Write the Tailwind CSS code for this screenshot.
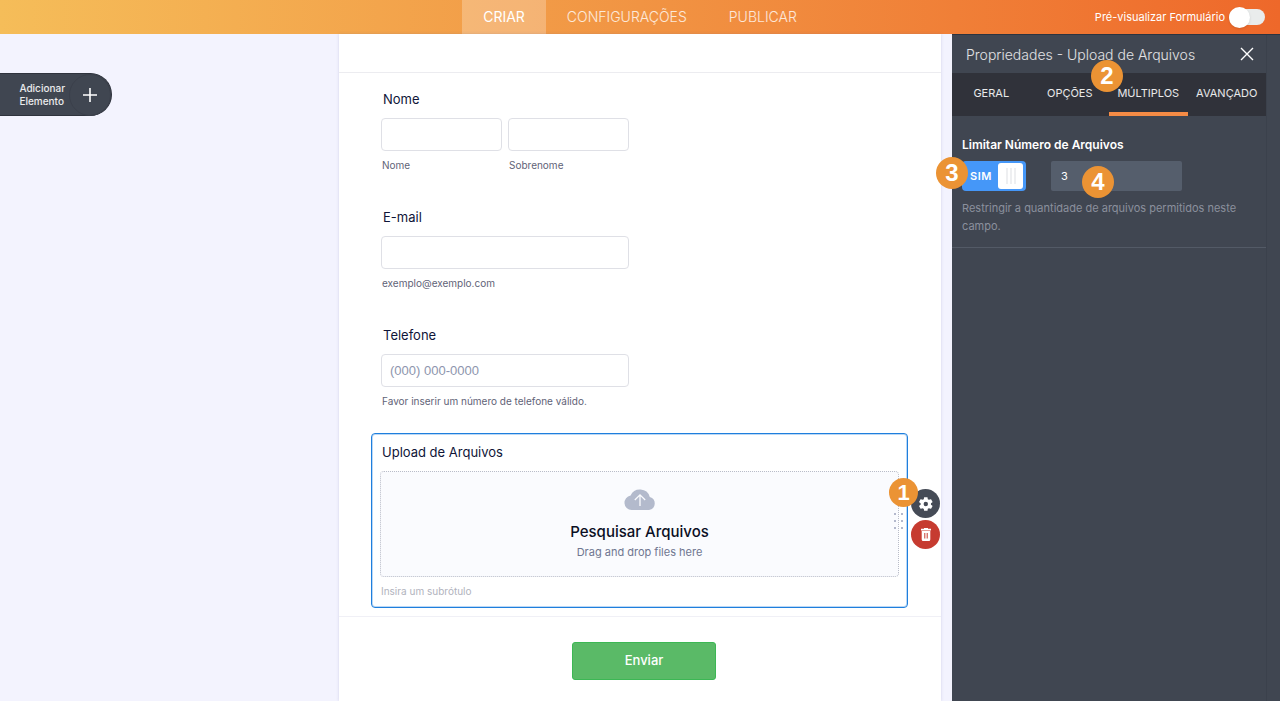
<!DOCTYPE html>
<html lang="pt-BR">
<head>
    <meta charset="UTF-8">
    <meta name="viewport" content="width=device-width, initial-scale=1.0">
    <title>Criar Formulário - Upload de Arquivos</title>
    <script src="https://cdn.jsdelivr.net/npm/@tailwindcss/browser@4"></script>
</head>
<body class="min-h-screen flex flex-col overflow-x-hidden bg-[#f3f3fe] font-['Inter',sans-serif] text-[#0f1538]">
    <!-- Top bar -->
    <header class="grid grid-cols-[1fr_auto_1fr] h-[34px] bg-linear-to-r from-[#f5bd59] via-[#f19443] to-[#ee682a]">
        <nav class="col-start-2 flex text-sm font-light text-white/80">
            <a href="#" class="flex items-center px-[21px] bg-white/25 text-white font-normal">CRIAR</a>
            <a href="#" class="flex items-center px-[21px]">CONFIGURAÇÕES</a>
            <a href="#" class="flex items-center px-[21px]">PUBLICAR</a>
        </nav>
        <label class="flex items-center justify-end gap-1 pr-[15px] text-[11px] text-white">
            Pré-visualizar Formulário
            <input type="checkbox" class="sr-only">
            <span class="flex items-center w-9 h-4 rounded-full bg-[#e9ecec]">
                <span class="size-[21px] rounded-full bg-white shadow shrink-0"></span>
            </span>
        </label>
    </header>

    <main class="grow grid grid-cols-[1fr_602px_1fr]">
        <!-- Add element -->
        <div class="pt-[39px]">
            <button type="button" class="flex items-center justify-end w-28 h-[43px] rounded-r-full bg-[#404651] border-y border-r border-[#2f333d] text-white/90 text-[10px] leading-[13px] font-medium text-left">
                <span>Adicionar<br>Elemento</span>
                <span class="flex items-center justify-center size-[42px] ml-1 rounded-full border border-[#3b404b]">
                    <svg class="size-[14px]" viewBox="0 0 14 14" fill="none" stroke="#fff" stroke-width="1.6"><path d="M7 0v14M0 7h14"/></svg>
                </span>
            </button>
        </div>

        <!-- Form -->
        <form class="bg-white shadow-[0_0_3px_rgba(90,90,150,0.2)]">
            <div class="h-[39px] border-b border-[#ececf0]"></div>
            <div class="pt-[7px] pl-8 pr-[33px]">
                <fieldset class="h-[118px] pt-[9px] px-[10px]">
                    <legend class="float-left w-full pl-[2px] text-[13px] leading-5">Nome</legend>
                    <div class="clear-both flex gap-[6px] pt-[9px]">
                        <div>
                            <input id="first" type="text" class="block w-[121px] h-[33px] px-2 rounded border border-[#dfe0e6] text-[13px]">
                            <label for="first" class="block mt-[6px] pl-[1px] text-[10px] leading-4 text-[#5f6377]">Nome</label>
                        </div>
                        <div>
                            <input id="last" type="text" class="block w-[121px] h-[33px] px-2 rounded border border-[#dfe0e6] text-[13px]">
                            <label for="last" class="block mt-[6px] pl-[1px] text-[10px] leading-4 text-[#5f6377]">Sobrenome</label>
                        </div>
                    </div>
                </fieldset>
                <div class="h-[118px] pt-[9px] px-[10px]">
                    <label for="email" class="block pl-[2px] text-[13px] leading-5">E-mail</label>
                    <input id="email" type="email" class="block w-[248px] h-[33px] mt-[9px] px-2 rounded border border-[#dfe0e6] text-[13px]">
                    <p class="mt-[6px] pl-[1px] text-[10px] leading-4 text-[#5f6377]">exemplo@exemplo.com</p>
                </div>
                <div class="h-[117px] pt-[9px] px-[10px]">
                    <label for="phone" class="block pl-[2px] text-[13px] leading-5">Telefone</label>
                    <input id="phone" type="tel" placeholder="(000) 000-0000" class="block w-[248px] h-[33px] mt-[9px] px-2 rounded border border-[#dfe0e6] text-[13px] font-['Liberation_Sans',sans-serif] placeholder:text-[#8d95ad]">
                    <p class="mt-[6px] pl-[1px] text-[10px] leading-4 text-[#5f6377]">Favor inserir um número de telefone válido.</p>
                </div>

                <!-- Selected field -->
                <div class="relative pt-[8px] pb-2 px-2 rounded border border-[#1f7fdd] ring-1 ring-inset ring-[#1f7fdd]/30">
                    <label for="files" class="block pl-[2px] text-[13px] leading-5">Upload de Arquivos</label>
                    <button id="files" type="button" class="flex flex-col items-center w-full h-[106px] mt-[9px] pt-4 rounded border border-dotted border-[#b9bcc8] bg-[#fafbfe]">
                        <svg class="w-8 h-[22px]" viewBox="0 0 32 22">
                            <path d="M7.5 22A7.3 7.3 0 0 1 6.6 7.5 10.3 10.3 0 0 1 25.8 8.9 6.7 6.7 0 0 1 25 22Z" fill="#b3bacc"/>
                            <path d="M16 18V7.5M10.8 12 16 6.9l5.2 5.1" fill="none" stroke="#fafbfe" stroke-width="1.3"/>
                        </svg>
                        <span class="mt-3 text-[15px] leading-5 font-medium text-[#0b0f24]">Pesquisar Arquivos</span>
                        <span class="mt-[2px] text-[11px] leading-4 text-[#6f7690]">Drag and drop files here</span>
                    </button>
                    <p class="mt-[6px] pl-[1px] text-[10px] leading-4 text-[#b1b3bd]">Insira um subrótulo</p>

                    <svg class="absolute top-[79px] right-1 w-[9px] h-4" viewBox="0 0 9 16" fill="#b3b8cc">
                        <path d="M0 0h2v2H0zM7 0h2v2H7zM0 7h2v2H0zM7 7h2v2H7zM0 14h2v2H0zM7 14h2v2H7z"/>
                    </svg>
                    <div class="absolute top-[55px] -right-[33px] flex flex-col gap-[2px]">
                        <button type="button" aria-label="Propriedades" class="flex items-center justify-center size-[29px] rounded-full bg-[#454b56]">
                            <svg class="size-4" viewBox="0 0 24 24" fill="#fff"><path d="M19.4 13a7.5 7.5 0 0 0 0-2l2.2-1.7c.2-.2.3-.5.1-.7l-2.1-3.6c-.1-.2-.4-.3-.6-.2l-2.6 1a7.7 7.7 0 0 0-1.7-1l-.4-2.700c0-.3-.3-.4-.5-.4H9.600c-.3 0-.5.2-.5.4l-.4 2.700c-.6.3-1.200.6-1.700 1l-2.600-1c-.2-.1-.5 0-.6.2L1.700 8.600c-.1.2-.1.5.1.7L4 11a7.500 7.500 0 0 0 0 2l-2.200 1.700c-.2.2-.3.5-.1.7l2.100 3.600c.1.2.4.3.6.2l2.600-1c.5.4 1.100.8 1.700 1l.4 2.700c0 .3.300.4.5.4h4.200c.3 0 .5-.2.5-.4l.4-2.700c.6-.3 1.200-.6 1.700-1l2.600 1c.2.1.5 0 .6-.2l2.100-3.600c.1-.2.1-.5-.1-.7zM11.700 15.300a3.300 3.300 0 1 1 0-6.600 3.300 3.300 0 0 1 0 6.600z"/></svg>
                        </button>
                        <button type="button" aria-label="Excluir" class="flex items-center justify-center size-[29px] rounded-full bg-[#c63b30]">
                            <svg class="w-[10px] h-[13px]" viewBox="0 0 10 13"><path d="M3 0h4v.8h3v1.600H0V.8h3zM.7 3h8.600V11.500Q9.300 13 7.800 13H2.200Q.7 13 .7 11.500z" fill="#fff"/><path d="M3.800 5v5.500M6.200 5v5.500" stroke="#c63b30" stroke-width="1"/></svg>
                        </button>
                    </div>
                    <span class="absolute top-11 -right-[11px] flex items-center justify-center size-[29px] rounded-full bg-[#eb9334] text-white text-[22px] font-bold font-['Liberation_Sans',sans-serif]">1</span>
                </div>
            </div>
            <div class="flex justify-center mt-2 pt-[25px] pl-2 border-t border-[#f0f0f6]">
                <button type="submit" class="w-36 h-[38px] rounded-[3px] border border-[#3cb754] bg-[#5aba67] text-white text-[13px] font-medium">Enviar</button>
            </div>
        </form>

        <!-- Properties panel -->
        <aside class="relative ml-[11px] pr-[14px] bg-[#404651] border-t border-[#2c3440] text-white">
            <div class="flex items-center justify-between h-[38px] pl-[14px] pr-3 text-white/85">
                <h2 class="text-[14px] font-light">Propriedades - Upload de Arquivos</h2>
                <button type="button" aria-label="Fechar">
                    <svg class="size-[14px]" viewBox="0 0 14 14" fill="none" stroke="#fff" stroke-width="1.4"><path d="m1 1 12 12M13 1 1 13"/></svg>
                </button>
            </div>
            <nav class="grid grid-cols-4 h-[43px] bg-[#30323a] text-[11px] text-white/90 text-center leading-10">
                <a href="#">GERAL</a>
                <a href="#">OPÇÕES</a>
                <a href="#" class="h-[43px] border-b-4 border-[#f58b45]">MÚLTIPLOS</a>
                <a href="#">AVANÇADO</a>
            </nav>
            <section class="pt-[21px] pb-3 px-[10px] border-b border-[#535a66]">
                <h3 class="text-xs leading-4 font-semibold">Limitar Número de Arquivos</h3>
                <div class="flex items-center mt-2">
                    <label class="flex items-center justify-between w-16 h-[30px] pl-2 pr-[3px] rounded bg-[#4597f8] text-[11px] font-semibold tracking-wider">
                        <input type="checkbox" checked class="sr-only">SIM
                        <span class="flex items-center justify-center gap-[2px] w-[25px] h-[26px] rounded-[3px] bg-white">
                            <span class="w-[2px] h-4 bg-[#eeeff1]"></span>
                            <span class="w-[2px] h-4 bg-[#eeeff1]"></span>
                            <span class="w-[2px] h-4 bg-[#eeeff1]"></span>
                        </span>
                    </label>
                    <input type="text" value="3" aria-label="Número de arquivos" class="w-[131px] h-[30px] ml-[25px] px-[10px] rounded-[2px] bg-[#555e6c] text-[11px] text-white">
                </div>
                <p class="mt-2 text-[11px] leading-[18px] text-[#8b909d]">Restringir a quantidade de arquivos permitidos neste campo.</p>
            </section>
            <div class="absolute inset-y-0 right-0 w-[14px] border-l border-[#3b414c] bg-[#404651]"></div>

            <!-- Step markers -->
            <span class="absolute top-[25px] left-[139px] flex items-center justify-center size-8 rounded-full bg-[#eb9334] text-2xl font-bold font-['Liberation_Sans',sans-serif]">2</span>
            <span class="absolute top-[122px] -left-4 flex items-center justify-center size-8 rounded-full bg-[#eb9334] text-2xl font-bold font-['Liberation_Sans',sans-serif]">3</span>
            <span class="absolute top-[131px] left-[130px] flex items-center justify-center size-8 rounded-full bg-[#eb9334] text-2xl font-bold font-['Liberation_Sans',sans-serif]">4</span>
        </aside>
    </main>
</body>
</html>
